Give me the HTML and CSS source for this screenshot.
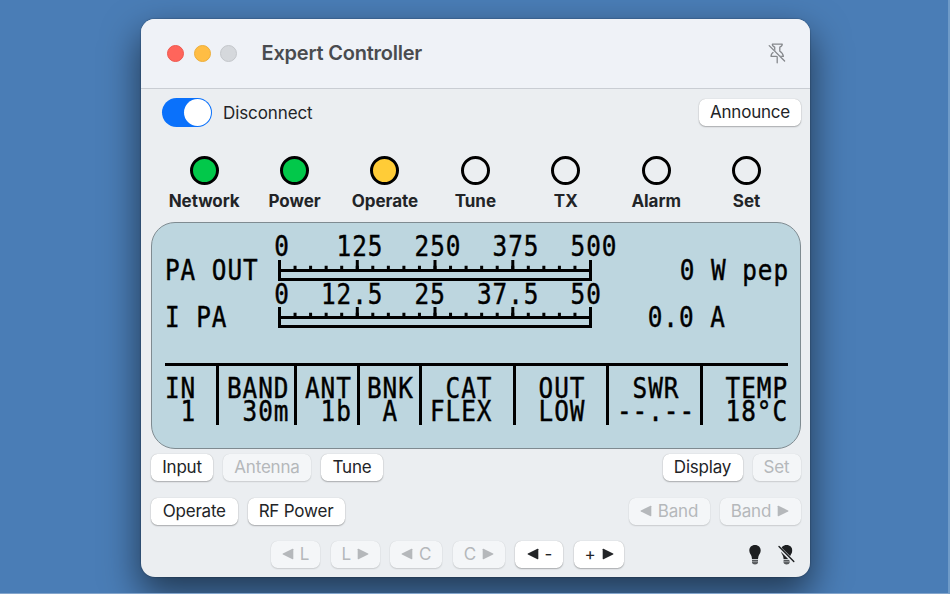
FILE: index.html
```html
<!DOCTYPE html>
<html lang="en">
<head>
  <meta charset="UTF-8">
  <meta name="viewport" content="width=device-width, initial-scale=1.0">
  <title>Expert Controller</title>
  <link rel="stylesheet" href="styles.css">
</head>
<body>
  <!-- shared shapes -->
  <svg class="defs" width="0" height="0">
    <defs>
      <symbol id="scale" viewBox="0 0 314 21">
        <path d="M1.5 0V21M312.5 0V21M79.3 0V10M157 0V10M234.8 0V10" stroke="#000" stroke-width="3"/>
        <path d="M0 10.5H314M0 19.5H314" stroke="#000" stroke-width="3"/>
        <path d="M1.5 7.5H312.5" stroke="#000" stroke-width="3.4" stroke-dasharray="3 12.55" stroke-dashoffset="1.5"/>
      </symbol>
      <symbol id="left" viewBox="0 0 12 12"><path d="M11.3 1.2V10.8Q11.3 11.5 10.5 11.2L.9 6.6Q.1 6 .9 5.4L10.5.8Q11.3.5 11.3 1.2Z" fill="currentColor"/></symbol>
      <symbol id="right" viewBox="0 0 12 12"><path d="M.7 1.2V10.8Q.7 11.5 1.5 11.2L11.1 6.6Q11.9 6 11.1 5.4L1.5.8Q.7.5.7 1.2Z" fill="currentColor"/></symbol>
      <symbol id="bulb" viewBox="0 0 12 20">
        <path d="M6 0C2.5 0 .3 2.4.3 5.6C.3 8.2 2 9.6 2.6 11.6L3 14H9L9.4 11.6C10 9.6 11.7 8.2 11.7 5.6C11.7 2.4 9.5 0 6 0Z" fill="#1d1f21"/>
        <path d="M3 14.8H9V17.8Q8.7 19.6 6 19.6T3 17.8Z" fill="#55585b"/>
        <path d="M3 16.7H9" stroke="#b5b8bb" stroke-width=".7"/>
      </symbol>
    </defs>
  </svg>

  <div class="window">
    <div class="titlebar">
      <span class="light red"></span>
      <span class="light yellow"></span>
      <span class="light off"></span>
      <h1>Expert Controller</h1>
      <svg class="pin" width="18" height="21" viewBox="0 0 18 21" fill="none" stroke="#85888c" stroke-width="1.3" stroke-linejoin="round" stroke-linecap="round">
        <path d="M4.4 1.2H14.2Q14.5 3 11.8 4.2V8.2Q15 10 15.4 13.3H3Q3 10.3 6.7 8.2V4.2Q4 3 4.4 1.2ZM9.2 13.3V19.8"/>
        <path d="M1.2 3.4L16.2 18.4" stroke="#eff2f7" stroke-width="2.4"/>
        <path d="M1.2 2.6L16.6 18"/>
      </svg>
    </div>

    <div class="connect-row">
      <span class="toggle"></span>
      <span class="connect-label">Disconnect</span>
      <button class="btn w-announce">Announce</button>
    </div>

    <div class="leds">
      <div class="led green"><i></i>Network</div>
      <div class="led green"><i></i>Power</div>
      <div class="led amber"><i></i>Operate</div>
      <div class="led"><i></i>Tune</div>
      <div class="led"><i></i>TX</div>
      <div class="led"><i></i>Alarm</div>
      <div class="led"><i></i>Set</div>
    </div>

    <!-- 40 column display -->
    <div class="lcd">
      <div class="line"><span class="text">       0   125  250  375  500</span></div>
      <div class="line meter"><span class="name"><span class="text">PA OUT</span></span><svg class="scale"><use href="#scale"/></svg><span class="text value">0 W pep</span></div>
      <div class="line"><span class="text">       0  12.5  25  37.5  50</span></div>
      <div class="line meter"><span class="name"><span class="text">I PA</span></span><svg class="scale"><use href="#scale"/></svg><span class="text value">0.0 A    </span></div>
      <div class="status">
        <div class="cell first"><span class="text">IN
 1</span></div>
        <div class="cell"><span class="text">BAND
 30m</span></div>
        <div class="cell"><span class="text">ANT
 1b</span></div>
        <div class="cell"><span class="text">BNK
 A</span></div>
        <div class="cell"><span class="text"> CAT
FLEX</span></div>
        <div class="cell"><span class="text"> OUT
 LOW</span></div>
        <div class="cell"><span class="text"> SWR
--.--</span></div>
        <div class="cell"><span class="text"> TEMP
 18°C</span></div>
      </div>
    </div>

    <div class="buttons">
      <button class="btn w-input">Input</button>
      <button class="btn w-antenna" disabled>Antenna</button>
      <button class="btn w-tune">Tune</button>
      <span class="spacer"></span>
      <button class="btn w-display">Display</button>
      <button class="btn w-set" disabled>Set</button>
    </div>
    <div class="buttons">
      <button class="btn w-operate">Operate</button>
      <button class="btn w-power">RF Power</button>
      <span class="spacer"></span>
      <button class="btn w-band" disabled><svg class="arrow"><use href="#left"/></svg>Band</button>
      <button class="btn w-band" disabled>Band<svg class="arrow"><use href="#right"/></svg></button>
    </div>
    <div class="buttons tuning">
      <button class="btn w-l" disabled><svg class="arrow"><use href="#left"/></svg>L</button>
      <button class="btn w-l" disabled>L<svg class="arrow"><use href="#right"/></svg></button>
      <button class="btn w-c" disabled><svg class="arrow"><use href="#left"/></svg>C</button>
      <button class="btn w-c" disabled>C<svg class="arrow"><use href="#right"/></svg></button>
      <button class="btn w-minus"><svg class="arrow"><use href="#left"/></svg>-</button>
      <button class="btn w-plus">+<svg class="arrow"><use href="#right"/></svg></button>
      <span class="spacer"></span>
      <svg class="bulb" width="12" height="20"><use href="#bulb"/></svg>
      <svg class="bulb-off" width="17" height="20" viewBox="0 0 17 20">
        <use href="#bulb" x="2.6" width="12" height="20"/>
        <path d="M1 2.4L15.8 17.2" stroke="#ebeef1" stroke-width="3.4"/>
        <path d="M1 1.6L15.8 16.4" stroke="#1d1f21" stroke-width="1.4" stroke-linecap="round"/>
      </svg>
    </div>
  </div>
</body>
</html>
```
FILE: styles.css
```css
* {
  box-sizing: border-box;
}
body {
  margin: 0;
  height: 594px;
  padding: 19px 0 0 141px;
  overflow: hidden;
  background: #4a7db6;
  border-right: 2px solid #6f9bc8;
  border-bottom: 1px solid #83a5cc;
  font-family: Inter, "Liberation Sans", sans-serif;
  color: #222427;
}
.defs {
  position: absolute;
}
.window {
  width: 669px;
  height: 558px;
  border-radius: 14px;
  background: #ebeef1;
  overflow: hidden;
  box-shadow: 0 0 1px 1px #0002, 0 16px 36px 2px #0008;
}

/* title bar */
.titlebar {
  height: 70px;
  display: flex;
  align-items: center;
  padding: 0 24px 1px 26px;
  background: #eff2f7;
  border-bottom: 1px solid #c9cdd3;
}
.light {
  width: 17px;
  height: 17px;
  border-radius: 50%;
  margin-right: 9.5px;
}
.red { background: #ff655b; border: 1px solid #ee584f; }
.yellow { background: #ffbd44; border: 1px solid #edae3a; }
.off { background: #d5d8dc; border: 1px solid #c4c7cb; }
h1 {
  margin: 0 auto 0 15px;
  font-size: 20px;
  font-weight: 600;
  letter-spacing: -0.22px;
  color: #494b4f;
}

/* connect switch */
.connect-row {
  height: 47px;
  display: flex;
  align-items: center;
  padding: 0 9px 0 21px;
}
.toggle {
  width: 50px;
  height: 29px;
  border-radius: 15px;
  background: #0a71fb;
  padding: 1px;
}
.toggle::after {
  content: "";
  display: block;
  width: 27px;
  height: 27px;
  margin-left: auto;
  border-radius: 50%;
  background: #fff;
}
.connect-label {
  margin: 0 auto 0 11px;
  font-size: 17px;
  letter-spacing: -0.1px;
}

/* buttons */
.btn {
  height: 27px;
  padding: 0 0 1px;
  border: none;
  border-radius: 6.5px;
  background: #fff;
  box-shadow: 0 0 1px #0004, 0 1px 1.5px #0004;
  color: #222427;
  font-family: inherit;
  font-size: 17px;
  letter-spacing: -0.2px;
  display: flex;
  align-items: center;
  justify-content: center;
  gap: 6px;
}
.btn:disabled {
  background: #f4f6f8;
  color: #b5b8bb;
  box-shadow: 0 0 1px #0002, 0 1px 1.5px #0002;
}
.arrow {
  width: 12px;
  height: 12px;
}
.w-announce { width: 102px; }
.w-input { width: 62px; }
.w-antenna { width: 88px; }
.w-tune { width: 62px; }
.w-display { width: 80px; }
.w-set { width: 48px; }
.w-operate { width: 86.5px; }
.w-power { width: 97px; }
.w-band { width: 81px; }
.w-l { width: 49px; }
.w-c { width: 52px; }
.w-minus { width: 48px; }
.w-plus { width: 50px; }

/* indicator lamps */
.leds {
  display: grid;
  grid-template-columns: repeat(7, 90.4px);
  padding: 20px 0 0 18px;
  height: 86px;
}
.led {
  display: flex;
  flex-direction: column;
  align-items: center;
  font-size: 17px;
  line-height: 20px;
  font-weight: 700;
  letter-spacing: -0.05px;
}
.led i {
  width: 29px;
  height: 29px;
  margin-bottom: 6px;
  border: 3px solid #000;
  border-radius: 50%;
}
.green i { background: #02c84a; }
.amber i { background: #ffcc37; }

/* display */
.lcd {
  width: 650px;
  height: 227px;
  margin-left: 10px;
  padding: 12px 12px 0 12.5px;
  border: 1px solid #7f8b91;
  border-radius: 24px;
  background: #bdd6df;
  color: #000;
  font-family: "DejaVu Sans Mono", monospace;
  font-size: 29px;
  line-height: 23.75px;
}
/* condensed so that one character is 15.6px wide */
.text {
  display: inline-block;
  white-space: pre;
  letter-spacing: 1.11px;
  transform: scaleX(0.84);
  transform-origin: left;
  -webkit-text-stroke: 0.45px #000;
}
.line {
  height: 23.75px;
}
.meter {
  width: 624px;
  display: flex;
}
.name {
  width: 113.5px;
}
.scale {
  width: 314px;
  height: 21px;
  margin-top: 1px;
}
.value {
  margin-left: auto;
  transform-origin: right;
}
.status {
  width: 623.5px;
  height: 62px;
  margin-top: 32.5px;
  display: flex;
  border-top: 3px solid #000;
}
.cell {
  width: 78px;
  padding: 11px 0 0 7.5px;
  border-right: 3px solid #000;
}
.cell.first { width: 55px; padding-left: 0; }
.cell:nth-child(3), .cell:nth-child(4) { width: 62.4px; }
.cell:nth-child(n+5) { width: 93.6px; }
.cell:last-child { width: 85px; border-right: none; }

/* button rows */
.buttons {
  display: flex;
  gap: 10px;
  align-items: center;
  padding: 5px 9.5px 11.5px 10px;
  height: 43.5px;
}
.tuning {
  padding-left: 130px;
  padding-right: 15px;
}
.tuning .btn {
  margin-right: 0.6px;
}
.spacer {
  flex: 1;
}
.bulb-off {
  margin-left: 7px;
}
```
